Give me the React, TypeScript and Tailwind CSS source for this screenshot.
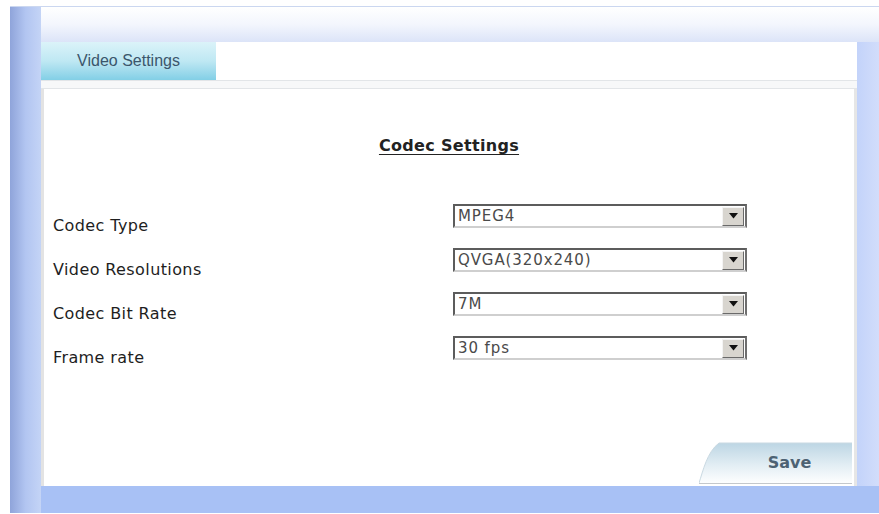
const fields = [
  ["Codec Type", "MPEG4"],
  ["Video Resolutions", "QVGA(320x240)"],
  ["Codec Bit Rate", "7M"],
  ["Frame rate", "30 fps"],
] as const;

function SelectBox({ value }: { value: string }) {
  return (
    <div className="flex h-[24px] w-[294px] items-center border-2 border-t-[#5c5c5c] border-l-[#5c5c5c] border-r-[#6f6f6f] border-b-[#cfcfcf] bg-white pl-[3px] pr-[1px]">
      <span className="flex-1 text-[15px] leading-none tracking-[0.06em] text-[#4a4a4a]">{value}</span>
      <span className="flex h-[19px] w-[22px] items-center justify-center border border-t-[#f4f4f4] border-l-[#f4f4f4] border-r-[#6a6a6a] border-b-[#6a6a6a] bg-[#d8d5cf]">
        <svg width="9" height="6" viewBox="0 0 9 6">
          <path d="M0 0h9L4.5 5.5z" fill="#111" />
        </svg>
      </span>
    </div>
  );
}

function SaveButton() {
  return (
    <button className="relative h-[42px] w-[153px] text-[16px] font-bold text-[#4d6273]">
      <svg className="absolute inset-0" width="153" height="42" viewBox="0 0 153 42">
        <defs>
          <linearGradient id="saveFill" x1="0" y1="0" x2="0" y2="1">
            <stop offset="0" stopColor="#bdd6e4" />
            <stop offset="0.55" stopColor="#e3eef4" />
            <stop offset="1" stopColor="#ffffff" />
          </linearGradient>
        </defs>
        <path d="M0 42 C4 30 8 10 20 1 L153 1 L153 42 Z" fill="url(#saveFill)" />
        <path d="M0 41 C4 29 8 10 20 1 L153 1" fill="none" stroke="#c9d9e2" />
        <path d="M0 41.5 H153" stroke="#c4c8cc" />
      </svg>
      <span className="relative pl-[28px]">Save</span>
    </button>
  );
}

export default function App() {
  return (
    <div className="h-[514px] w-[879px] bg-white pl-[10px] pt-[6px] font-['DejaVu_Sans',sans-serif]">
      <div className="flex h-[507px] border-t border-[#cbd7f0]">
        {/* left rail */}
        <div className="w-[31px] bg-gradient-to-r from-[#8fa4da] via-[#b2c5f1] to-[#c4d4f6]" />
        <div className="flex flex-1 flex-col">
          <div className="h-[35px] bg-gradient-to-b from-white via-[#f3f6fd] to-[#dce4f8]" />
          <div className="flex flex-1">
            <div className="flex w-[816px] flex-col bg-white">
              <div className="flex h-[38px]">
                <div className="flex w-[175px] items-center justify-center bg-gradient-to-b from-[#dbf3f9] via-[#bfe8f3] to-[#82cfe6] font-['Liberation_Sans',sans-serif] text-[16px] text-[#3b566c]">
                  Video Settings
                </div>
              </div>
              <div className="h-[9px] border-y border-[#e2e5e8] bg-[#f7f8f9]" />
              <div className="flex flex-1 flex-col border-x-[3px] border-l-[#e3e3e3] border-r-[#e6e6e6] pb-[2px]">
                <h2 className="mt-[45px] text-center text-[16px] font-bold tracking-[0.02em] text-[#222] underline underline-offset-[3px]">
                  Codec Settings
                </h2>
                <div className="mt-[46px] flex flex-col pl-[9px]">
                  {fields.map(([label, value]) => (
                    <div key={label} className="flex h-[44px] items-start">
                      <span className="mt-[12px] w-[400px] text-[16px] leading-[20px] tracking-[0.025em] text-[#1e1e1e]">{label}</span>
                      <SelectBox value={value} />
                    </div>
                  ))}
                </div>
                <div className="mt-auto flex justify-end pr-[2px]">
                  <SaveButton />
                </div>
              </div>
            </div>
            {/* right rail */}
            <div className="flex-1 bg-gradient-to-r from-[#c3d3fa] to-[#d2ddfb]" />
          </div>
          <div className="h-[27px] bg-[#a8c1f5]" />
        </div>
      </div>
    </div>
  );
}
